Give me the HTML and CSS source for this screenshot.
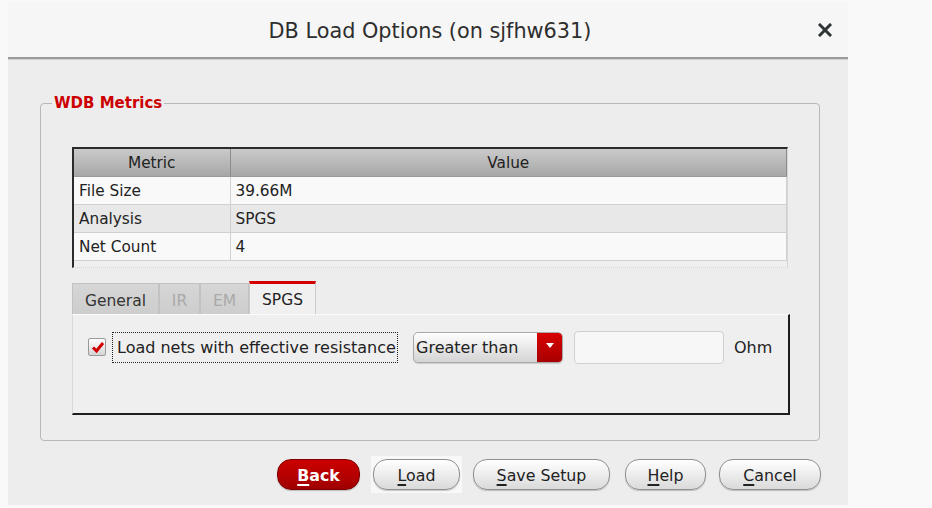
FILE: index.html
```html
<!DOCTYPE html>
<html>
<head>
<meta charset="utf-8">
<link rel="stylesheet" href="styles.css">
</head>
<body>
<div class="dialog">
  <header class="titlebar">
    <span></span>
    <div class="title">DB Load Options (on sjfhw631)</div>
    <div class="close" aria-label="Close">
      <svg width="14" height="14" viewBox="0 0 14 14"><path d="M2 2 L12 12 M12 2 L2 12" stroke="#2e3436" stroke-width="3" stroke-linecap="square"/></svg>
    </div>
  </header>
  <main class="content">
    <fieldset class="group">
      <legend>WDB Metrics</legend>
      <div class="table-view">
        <table>
          <colgroup><col class="c1"><col></colgroup>
          <thead><tr><th>Metric</th><th class="last">Value</th></tr></thead>
          <tbody>
            <tr class="odd"><td>File Size</td><td>39.66M</td></tr>
            <tr class="even"><td>Analysis</td><td>SPGS</td></tr>
            <tr class="odd"><td>Net Count</td><td>4</td></tr>
          </tbody>
        </table>
      </div>
      <div class="tabs">
        <div class="tab w-general">General</div>
        <div class="tab disabled w-ir">IR</div>
        <div class="tab disabled w-em">EM</div>
        <div class="tab active w-spgs">SPGS</div>
      </div>
      <div class="tab-panel">
        <div class="row">
          <span class="checkbox">
            <svg width="15" height="15" viewBox="0 0 15 15"><path d="M3 7.5 L6.5 11 L13 3" fill="none" stroke="#d00000" stroke-width="3" stroke-linejoin="miter"/></svg>
          </span>
          <span class="focus-label">Load nets with effective resistance</span>
          <div class="combo">
            <span class="combo-text">Greater than</span>
            <span class="combo-arrow"><svg width="10" height="7" viewBox="0 0 10 7"><path d="M1 1 H9 L5 6 Z" fill="#fff"/></svg></span>
          </div>
          <input class="field" type="text" value="">
          <span class="unit">Ohm</span>
        </div>
      </div>
    </fieldset>
    <div class="buttons">
      <button class="btn btn-back"><u>B</u>ack</button>
      <span class="focus-wrap"><button class="btn btn-load"><u>L</u>oad</button></span>
      <button class="btn btn-save"><u>S</u>ave Setup</button>
      <button class="btn btn-help"><u>H</u>elp</button>
      <button class="btn btn-cancel"><u>C</u>ancel</button>
    </div>
  </main>
</div>
</body>
</html>
```

FILE: styles.css
```css
html, body {
  margin: 0;
  background: #f9f9f9;
}
body {
  padding: 2px 0 0 8px;
  font-family: "DejaVu Sans", sans-serif;
  font-size: 16px;
  color: #222;
}
.dialog {
  width: 840px;
  height: 503px;
  background: #eeeded;
  display: flex;
  flex-direction: column;
}
.titlebar {
  flex: none;
  height: 55px;
  background: #f6f6f6;
  border-bottom: 2px solid #9b9b9b;
  box-shadow: 0 1px 0 #d2d2d2;
  display: grid;
  grid-template-columns: 1fr auto 1fr;
  align-items: center;
}
.title {
  font-size: 20.8px;
  color: #2e2e2e;
  padding: 3px 0 0 4px;
}
.close {
  justify-self: end;
  margin-right: 16px;
  width: 14px;
  height: 14px;
  display: flex;
}
.content {
  padding: 33px 28px 0 32px;
}
.group {
  margin: 0;
  padding: 0;
  width: 780px;
  height: 349px;
  box-sizing: border-box;
  border: 1px solid #b8b8b8;
  border-radius: 4px;
}
.group legend {
  margin-left: 11px;
  padding: 0 2px;
  color: #cc0000;
  font-weight: bold;
  font-size: 15px;
  line-height: 22px;
}
.table-view {
  margin: 33px 0 0 31px;
  width: 716px;
  height: 121px;
  box-sizing: border-box;
  border-top: 2px solid #2b2b2b;
  border-left: 2px solid #2b2b2b;
  border-right: 1px solid #d6d6d6;
  border-bottom: 1px dotted #d6d6d6;
  background: #efefef;
  font-size: 15.3px;
}
.table-view table {
  width: 100%;
  border-collapse: collapse;
}
.table-view col.c1 {
  width: 156px;
}
.table-view th {
  height: 27px;
  padding: 0;
  font-weight: normal;
  background: linear-gradient(#cacaca, #a7a7a7);
  border-right: 1px solid #8c8c8c;
  border-bottom: 1px solid #9a9a9a;
  color: #222;
}
.table-view td {
  height: 27px;
  padding: 0 0 0 5px;
  border-right: 1px solid #d0d0d0;
  border-bottom: 1px solid #d0d0d0;
}
.table-view tr.odd td {
  background: #f9f9f9;
}
.table-view tr.even td {
  background: #e8e8e8;
}
.tabs {
  display: flex;
  align-items: flex-end;
  margin: 13px 0 0 31px;
  height: 33px;
  font-size: 15.5px;
}
.tab {
  box-sizing: border-box;
  height: 31px;
  padding-top: 3px;
  border: 1px solid #c2c2c2;
  border-bottom: none;
  background: linear-gradient(#d6d6d6, #cdcdcd);
  display: flex;
  align-items: center;
  justify-content: center;
  color: #333;
}
.tab.disabled {
  color: #a9a9a9;
}
.tab.active {
  height: 33px;
  padding-top: 1px;
  border-top: 3px solid #d40000;
  border-left: 1px solid #cbcbcb;
  border-right: 1px solid #cbcbcb;
  background: #f1f0f0;
  color: #222;
}
.w-general { width: 87px; }
.w-ir { width: 41px; }
.w-em { width: 49px; }
.w-spgs { width: 67px; }
.tab-panel {
  margin-left: 31px;
  width: 718px;
  height: 101px;
  box-sizing: border-box;
  border-top: 1px solid #fbfbfb;
  border-left: 1px solid #d9d9d9;
  border-right: 2px solid #1e1e1e;
  border-bottom: 2px solid #1e1e1e;
  padding: 16px 0 0 15px;
  background: #f0efef;
}
.row {
  display: flex;
  align-items: center;
  height: 32px;
}
.checkbox {
  box-sizing: border-box;
  width: 18px;
  height: 18px;
  margin-right: 6px;
  border: 1px solid #9a9a9a;
  border-radius: 2px;
  background: linear-gradient(#ffffff, #d5d5d5);
  display: flex;
  align-items: center;
  justify-content: center;
}
.focus-label {
  box-sizing: border-box;
  width: 286px;
  height: 31px;
  padding: 1px 0 0 4px;
  border: 1px dotted #222;
  display: flex;
  align-items: center;
  white-space: nowrap;
}
.combo {
  box-sizing: border-box;
  margin-left: 15px;
  width: 150px;
  height: 31px;
  border: 1px solid #a9a9a9;
  border-radius: 5px;
  background: linear-gradient(#fefefe, #d4d4d4);
  display: flex;
  overflow: hidden;
  box-shadow: 0 1px 1px rgba(0,0,0,0.15);
}
.combo-text {
  flex: 1;
  display: flex;
  align-items: center;
  padding: 1px 0 0 2px;
}
.combo-arrow {
  width: 25px;
  background: linear-gradient(#d80000, #a80000);
  display: flex;
  justify-content: center;
  padding-top: 9px;
  box-sizing: border-box;
}
.field {
  box-sizing: border-box;
  margin: 0 0 0 11px;
  width: 150px;
  height: 33px;
  border: 1px solid #d0d0d0;
  border-radius: 4px;
  background: #f7f7f7;
  padding: 0 4px;
  font: inherit;
}
.unit {
  margin-left: 10px;
}
.buttons {
  display: flex;
  justify-content: flex-end;
  align-items: center;
  gap: 13px;
  margin: 15px -1px 0 0;
  height: 37px;
}
.btn {
  box-sizing: border-box;
  height: 31px;
  border: 1px solid #8f8f8f;
  border-radius: 14px;
  background: linear-gradient(#ffffff, #dadada);
  box-shadow: 0 1px 1px rgba(0,0,0,0.2);
  font-family: "DejaVu Sans", sans-serif;
  font-size: 15.8px;
  color: #222;
  padding: 2px 0 0;
  cursor: pointer;
}
.btn u {
  text-decoration-thickness: 2px;
  text-underline-offset: 3px;
}
.btn-back {
  width: 83px;
  background: linear-gradient(#cc0000, #a00000);
  border-color: #7c0000;
  color: #fff;
  font-weight: bold;
}
.focus-wrap {
  display: flex;
  padding: 3px 2px;
  margin: 0 -2px;
  background: #f8f8f8;
}
.btn-load { width: 87px; }
.btn-save { width: 137px; }
.btn-help { width: 81px; margin-left: 2px; }
.btn-cancel { width: 102px; }
```
